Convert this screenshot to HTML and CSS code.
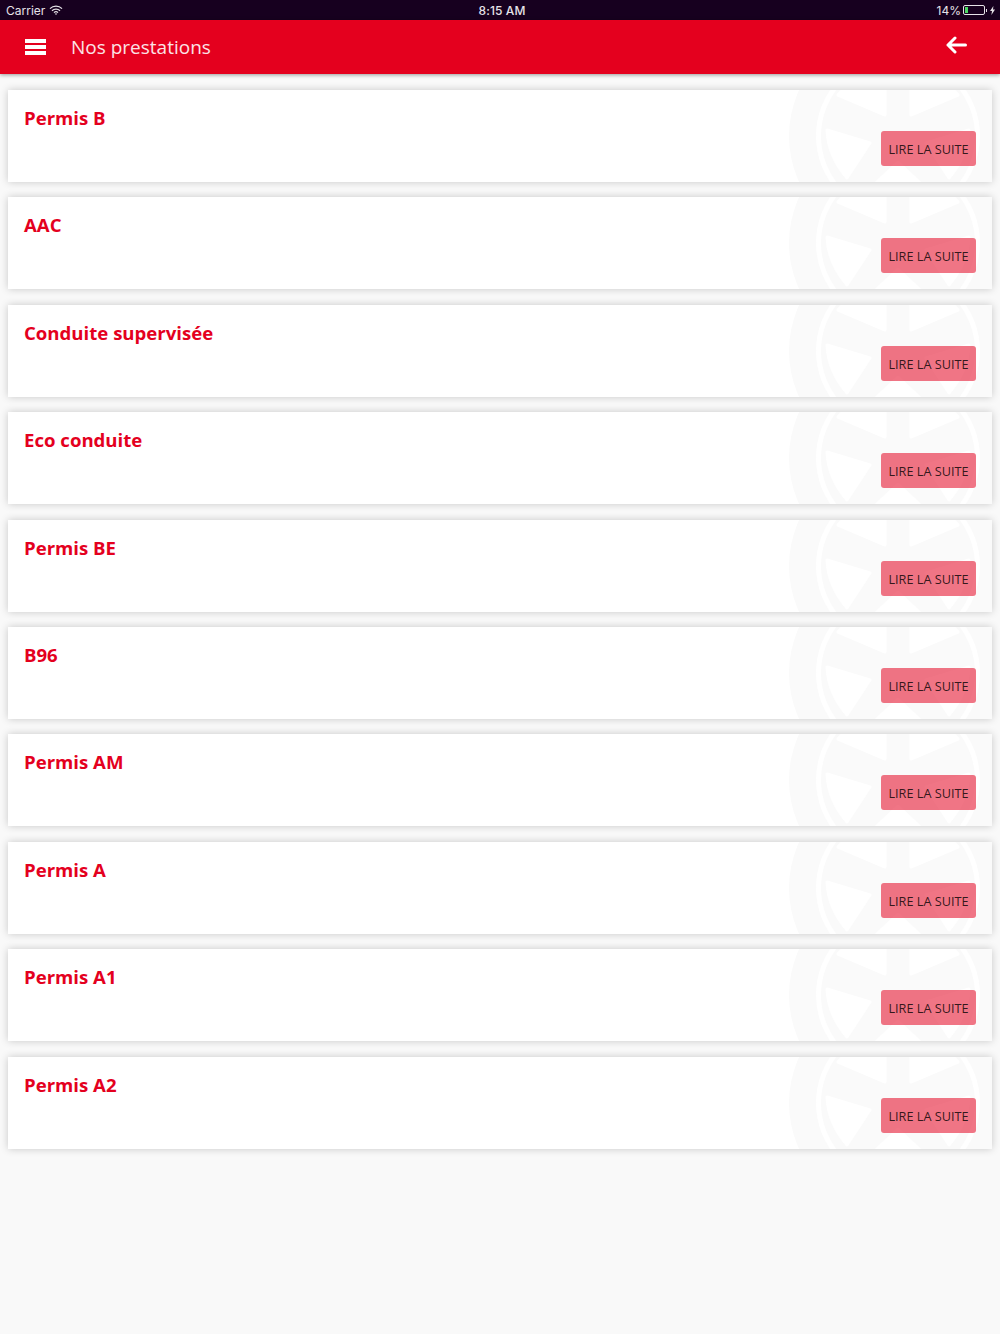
FILE: index.html
```html
<!DOCTYPE html>
<html lang="fr">
<head>
  <meta charset="UTF-8">
  <title>Nos prestations</title>
  <link rel="stylesheet" href="styles.css">
</head>
<body>

<svg class="defs" width="0" height="0">
  <symbol id="wheel" viewBox="-110 -110 220 220">
    <circle class="wheel-disc" r="109"/>
    <circle class="wheel-gap" r="79.500"/>
    <path class="wheel-hole" d="M-13 -21V-70Q-40 -66 -60 -41Z"/>
    <path class="wheel-hole" d="M13 -21V-70Q40 -66 60 -41Z"/>
    <path class="wheel-hole" d="M-71 -6L-28 7L-51 42Q-70 20 -71 -6Z"/>
    <path class="wheel-hole" d="M71 -6L28 7L51 42Q70 20 71 -6Z"/>
    <path class="wheel-hole" d="M0 26L-36 60Q0 76 36 60Z"/>
  </symbol>
</svg>

<div class="status-bar">
  <div class="status-left">
    <span>Carrier</span>
    <svg class="wifi" width="14" height="10" viewBox="0 0 14 10">
      <path d="M1 3.600a8.500 8.500 0 0 1 12 0M3 5.700a5.700 5.700 0 0 1 8 0M5 7.600a2.900 2.900 0 0 1 4 0" fill="none" stroke="#e6e2e8" stroke-width="1.300"/>
      <path d="M7 10l-1.300-1.600h2.600z" fill="#e6e2e8"/>
    </svg>
  </div>
  <div class="status-time">8:15 AM</div>
  <div class="status-right">
    <span>14%</span>
    <div class="battery"><div class="battery-level"></div></div>
    <div class="battery-tip"></div>
    <svg class="bolt" width="5" height="9" viewBox="0 0 5 9"><path d="M3.400 0L0 5h2L1.400 9L5 3.600H3z" fill="#e6e2e8"/></svg>
  </div>
</div>

<div class="app-header">
  <div class="menu-icon"><span></span><span></span><span></span></div>
  <div class="app-title">Nos prestations</div>
  <svg class="back-icon" width="22" height="18" viewBox="0 0 22 18">
    <path d="M20.500 9H3M10 2L3 9l7 7" fill="none" stroke="#fff" stroke-width="3" stroke-linecap="round" stroke-linejoin="round"/>
  </svg>
</div>

<div class="list">
  <div class="card">
    <svg class="watermark"><use href="#wheel"/></svg>
    <h2>Permis B</h2>
    <a class="more-btn" href="#">LIRE LA SUITE</a>
  </div>
  <div class="card">
    <svg class="watermark"><use href="#wheel"/></svg>
    <h2>AAC</h2>
    <a class="more-btn" href="#">LIRE LA SUITE</a>
  </div>
  <div class="card">
    <svg class="watermark"><use href="#wheel"/></svg>
    <h2>Conduite supervisée</h2>
    <a class="more-btn" href="#">LIRE LA SUITE</a>
  </div>
  <div class="card">
    <svg class="watermark"><use href="#wheel"/></svg>
    <h2>Eco conduite</h2>
    <a class="more-btn" href="#">LIRE LA SUITE</a>
  </div>
  <div class="card">
    <svg class="watermark"><use href="#wheel"/></svg>
    <h2>Permis BE</h2>
    <a class="more-btn" href="#">LIRE LA SUITE</a>
  </div>
  <div class="card">
    <svg class="watermark"><use href="#wheel"/></svg>
    <h2>B96</h2>
    <a class="more-btn" href="#">LIRE LA SUITE</a>
  </div>
  <div class="card">
    <svg class="watermark"><use href="#wheel"/></svg>
    <h2>Permis AM</h2>
    <a class="more-btn" href="#">LIRE LA SUITE</a>
  </div>
  <div class="card">
    <svg class="watermark"><use href="#wheel"/></svg>
    <h2>Permis A</h2>
    <a class="more-btn" href="#">LIRE LA SUITE</a>
  </div>
  <div class="card">
    <svg class="watermark"><use href="#wheel"/></svg>
    <h2>Permis A1</h2>
    <a class="more-btn" href="#">LIRE LA SUITE</a>
  </div>
  <div class="card">
    <svg class="watermark"><use href="#wheel"/></svg>
    <h2>Permis A2</h2>
    <a class="more-btn" href="#">LIRE LA SUITE</a>
  </div>
</div>

</body>
</html>
```

FILE: styles.css
```css
html, body {
  height: 100%;
}
body {
  margin: 0;
  padding: 0;
  background: #f9f9f9;
  font-family: "Open Sans", sans-serif;
  overflow: hidden;
}
.defs {
  display: block;
}
.wheel-disc {
  fill: #fafafa;
}
.wheel-gap {
  fill: none;
  stroke: #fff;
  stroke-width: 5px;
}
.wheel-hole {
  fill: #fff;
  stroke: #fff;
  stroke-width: 3px;
  stroke-linejoin: round;
}
.status-bar {
  height: 20px;
  background: #17001f;
  color: #e6e2e8;
  font-family: Inter, "Liberation Sans", sans-serif;
  font-size: 12px;
  display: grid;
  grid-template-columns: 1fr auto 1fr;
  align-items: center;
  padding: 0 5px 0 6px;
}
.status-left {
  display: flex;
  align-items: center;
  gap: 4px;
}
.status-time {
  font-weight: 500;
  letter-spacing: 0.1px;
  padding-left: 3px;
}
.status-right {
  display: flex;
  align-items: center;
  justify-content: flex-end;
}
.battery {
  width: 18px;
  height: 6px;
  margin-left: 2px;
  border: 1px solid #e6e2e8;
  border-radius: 2px;
  padding: 1px;
}
.battery-level {
  width: 3px;
  height: 100%;
  background: #4cd964;
}
.battery-tip {
  width: 1px;
  height: 3px;
  margin-left: 1px;
  background: #e6e2e8;
}
.bolt {
  margin-left: 3px;
}
.app-header {
  height: 54px;
  background: #e4001e;
  box-shadow: 0 1px 4px rgba(0,0,0,0.4);
  display: flex;
  align-items: center;
  padding: 0 33px 0 25px;
  color: #fff;
}
.menu-icon {
  width: 21px;
  display: flex;
  flex-direction: column;
  gap: 2px;
}
.menu-icon span {
  height: 4px;
  background: #fff;
}
.app-title {
  flex: 1;
  margin-left: 25px;
  margin-bottom: 1px;
  font-size: 19px;
  color: #fbe3e6;
}
.back-icon {
  margin-bottom: 4px;
}
.list {
  display: flex;
  flex-direction: column;
  gap: 15.4px;
  padding: 16px 8px 0;
}
.card {
  position: relative;
  height: 92px;
  background: #fff;
  box-shadow: 0 0 8px rgba(0,0,0,0.2);
  overflow: hidden;
}
.watermark {
  position: absolute;
  left: 780px;
  top: -64px;
  width: 220px;
  height: 220px;
}
.card h2 {
  position: relative;
  margin: 0;
  padding: 14px 16px 0;
  font-size: 18.6px;
  line-height: 27px;
  font-weight: 700;
  color: #e4001e;
}
.more-btn {
  position: absolute;
  right: 16px;
  bottom: 16px;
  width: 95px;
  height: 35px;
  line-height: 36px;
  text-align: center;
  border-radius: 3px;
  background: rgba(228,0,30,0.54);
  color: rgba(0,0,0,0.8);
  font-size: 12.7px;
  text-decoration: none;
}
```
